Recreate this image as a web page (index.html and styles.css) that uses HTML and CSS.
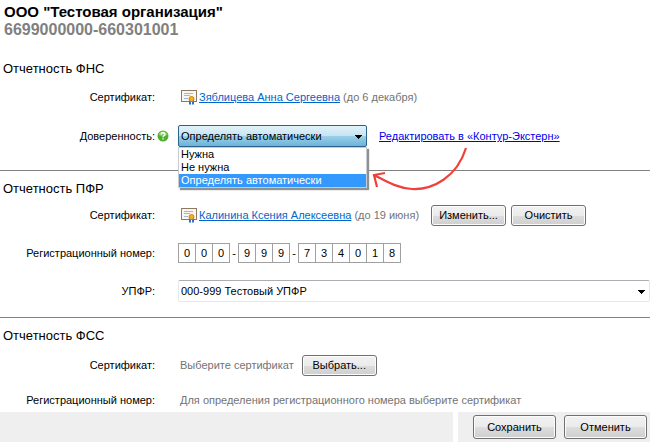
FILE: index.html
```html
<!DOCTYPE html>
<html lang="ru">
  <head>
    <meta charset="utf-8">
    <meta name="viewport" content="width=device-width, initial-scale=1">
    <title>ООО "Тестовая организация"</title>
    <link rel="stylesheet" href="styles.css">
  </head>
  <body>
    <svg class="defs" width="0" height="0">
      <symbol id="certificate" viewBox="0 0 16 15">
        <rect x="0.5" y="0.5" width="15" height="11" fill="#f8f6f2" stroke="#8c7a64"/>
        <path d="M3 3.500h9M3 5.500h6M3 8.500h4" stroke="#a9b3d6"/>
        <path d="M8 10v4.500h2V12h1v2.500h2V10z" fill="#2f6fd0"/>
        <circle cx="10.500" cy="9" r="2.500" fill="#f2b01e" stroke="#c98712"/>
      </symbol>
    </svg>
    <form class="page">
      <header class="company">
        <h1>ООО "Тестовая организация"</h1>
        <p class="inn">6699000000-660301001</p>
      </header>

      <section class="section fns">
        <h2>Отчетность ФНС</h2>
        <div class="row">
          <span class="label">Сертификат:</span>
          <div class="value">
            <svg class="cert" width="16" height="15"><use href="#certificate"/></svg>
            <a class="person" href="#">Зяблицева Анна Сергеевна</a>
            <span class="hint">(до 6 декабря)</span>
          </div>
        </div>
        <div class="row">
          <label class="label" for="trust">Доверенность:</label>
          <button class="help" type="button" aria-label="Справка">
            <svg width="12" height="12" viewBox="0 0 12 12">
              <circle cx="6" cy="6" r="5.500" fill="#4fae2e"/>
              <path d="M1.500 5a4.600 4.600 0 0 1 9 0c-3 1.500-6 1.500-9 0z" fill="#86cf66"/>
              <path d="M4.200 4.500c0-2.400 3.700-2.300 3.600-.1 0 1.300-1.800 1.400-1.800 2.900M6 8.300v1.300" fill="none" stroke="#fff" stroke-width="1.400"/>
            </svg>
          </button>
          <div class="value">
            <div class="dropdown">
              <select class="select select-open" id="trust">
                <option>Нужна</option>
                <option>Не нужна</option>
                <option selected>Определять автоматически</option>
              </select>
              <ul class="options">
                <li>Нужна</li>
                <li>Не нужна</li>
                <li class="active">Определять автоматически</li>
              </ul>
              <svg class="arrow" width="98" height="46" viewBox="0 0 98 46">
                <path d="M96 2C87 31 63 44 42 43 26 42 14 34 4 29M15 27L4 29l3 12" fill="none" stroke="#f0403c" stroke-width="2.200"/>
              </svg>
            </div>
            <a class="edit" href="#">Редактировать в «Контур-Экстерн»</a>
          </div>
        </div>
      </section>

      <section class="section pfr">
        <h2>Отчетность ПФР</h2>
        <div class="row">
          <span class="label">Сертификат:</span>
          <div class="value">
            <svg class="cert" width="16" height="15"><use href="#certificate"/></svg>
            <a class="person" href="#">Калинина Ксения Алексеевна</a>
            <span class="hint">(до 19 июня)</span>
            <div class="buttons">
              <button class="btn" type="button">Изменить...</button>
              <button class="btn" type="button">Очистить</button>
            </div>
          </div>
        </div>
        <div class="row">
          <label class="label" for="digit">Регистрационный номер:</label>
          <div class="value digits">
            <div class="group">
              <input id="digit" maxlength="1" value="0">
              <input aria-label="2" maxlength="1" value="0">
              <input aria-label="3" maxlength="1" value="0">
            </div>
            <span class="dash">-</span>
            <div class="group">
              <input aria-label="4" maxlength="1" value="9">
              <input aria-label="5" maxlength="1" value="9">
              <input aria-label="6" maxlength="1" value="9">
            </div>
            <span class="dash">-</span>
            <div class="group">
              <input aria-label="7" maxlength="1" value="7">
              <input aria-label="8" maxlength="1" value="3">
              <input aria-label="9" maxlength="1" value="4">
              <input aria-label="10" maxlength="1" value="0">
              <input aria-label="11" maxlength="1" value="1">
              <input aria-label="12" maxlength="1" value="8">
            </div>
          </div>
        </div>
        <div class="row">
          <label class="label" for="upfr">УПФР:</label>
          <div class="value">
            <select class="select select-wide" id="upfr">
              <option>000-999 Тестовый УПФР</option>
            </select>
          </div>
        </div>
      </section>

      <section class="section fss">
        <h2>Отчетность ФСС</h2>
        <div class="row">
          <span class="label">Сертификат:</span>
          <div class="value">
            <span class="hint empty">Выберите сертификат</span>
            <button class="btn" type="button">Выбрать...</button>
          </div>
        </div>
        <div class="row">
          <span class="label">Регистрационный номер:</span>
          <div class="value">
            <span class="hint empty">Для определения регистрационного номера выберите сертификат</span>
          </div>
        </div>
      </section>

      <footer class="footer">
        <div class="footer-left"></div>
        <div class="footer-right">
          <button class="btn btn-big" type="submit">Сохранить</button>
          <button class="btn btn-big" type="button">Отменить</button>
        </div>
      </footer>
    </form>
  </body>
</html>
```
FILE: styles.css
```css
* {
  box-sizing: border-box;
  font-family: "Liberation Sans", Arial, sans-serif;
}

body {
  margin: 0;
  background-color: #fff;
  color: #000;
  font-size: 11px;
}

h1, h2, p, ul {
  margin: 0;
  padding: 0;
}

.defs {
  position: absolute;
}

.company {
  padding: 3px 4px 12px;
  line-height: 18px;
}

h1 {
  font-size: 15px;
}

.inn {
  color: #808080;
  font-size: 16px;
  font-weight: bold;
}

.section {
  display: flex;
  flex-direction: column;
  gap: 16px;
  padding: 9px 0 15px;
}

.section + .section {
  border-top: 1px solid #808080;
}

h2 {
  margin: 0 3px -10px;
  font-size: 13px;
  font-weight: normal;
  line-height: 18px;
}

.fns {
  gap: 17px;
  padding-bottom: 23px;
}

.fns h2 {
  margin-bottom: -9px;
}

.fss {
  gap: 13px;
  padding-bottom: 1px;
}

.fss h2 {
  margin-bottom: -4px;
}

.row {
  display: grid;
  grid-template-columns: 155px 23px 1fr;
  align-items: center;
  min-height: 22px;
}

.label {
  text-align: right;
  white-space: nowrap;
}

.value {
  grid-column: 3;
  display: flex;
  align-items: center;
  white-space: nowrap;
}

.help {
  width: 12px;
  height: 12px;
  margin-left: 2px;
  padding: 0;
  border: none;
  background: none;
}

.help svg {
  display: block;
}

.cert {
  margin: 0 2px 0 3px;
}

.person {
  margin-right: 3px;
  color: #0066cc;
}

.hint {
  color: #737373;
}

.empty {
  margin: 0 8px 0 2px;
}

.edit {
  margin-left: 12px;
  color: #0000ee;
}

.select {
  appearance: none;
  display: block;
  height: 22px;
  margin: 0;
  padding: 0 18px 0 2px;
  border: 1px solid #e3e9ef;
  border-top-color: #abadb3;
  border-radius: 2px;
  background: linear-gradient(#000, #000) right 4px top 9px / 7px 1px no-repeat,
    linear-gradient(#000, #000) right 5px top 10px / 5px 1px no-repeat,
    linear-gradient(#000, #000) right 6px top 11px / 3px 1px no-repeat,
    linear-gradient(#000, #000) right 7px top 12px / 1px 1px no-repeat,
    #fff;
  color: #000;
  font-size: 11px;
}

.select-wide {
  width: 100%;
}

.dropdown {
  position: relative;
  width: 189px;
}

.select-open {
  width: 100%;
  border-color: #2c628b;
  background: linear-gradient(#000, #000) right 4px top 9px / 7px 1px no-repeat,
    linear-gradient(#000, #000) right 5px top 10px / 5px 1px no-repeat,
    linear-gradient(#000, #000) right 6px top 11px / 3px 1px no-repeat,
    linear-gradient(#000, #000) right 7px top 12px / 1px 1px no-repeat,
    linear-gradient(#e3f2fa, #c5e4f3 50%, #9acfe9 51%, #6cb3d9);
}

.options {
  position: absolute;
  top: 22px;
  left: 0;
  width: 100%;
  border: 1px solid #c8ccd0;
  background-color: #fff;
  box-shadow: 2px 2px 1px #909090;
  line-height: 13px;
  list-style: none;
}

.options li {
  padding-left: 2px;
}

.options .active {
  background-color: #3399ff;
  color: #fff;
}

.arrow {
  position: absolute;
  top: 21px;
  left: 192px;
}

.buttons {
  display: flex;
  gap: 5px;
  margin-left: 12px;
}

.btn {
  width: 75px;
  height: 21px;
  padding: 0 0 1px;
  border: 1px solid #707070;
  border-radius: 3px;
  background: linear-gradient(#f2f2f2, #ebebeb 50%, #dddddd 51%, #cfcfcf);
  box-shadow: inset 0 0 0 1px #fcfcfc;
  color: #000;
  font-size: 11px;
}

.btn-big {
  width: 83px;
  height: 24px;
}

.group {
  display: flex;
}

.group input {
  width: 18px;
  height: 20px;
  margin: 0 -1px 0 0;
  padding: 0;
  border: 1px solid #a0a0a0;
  border-radius: 0;
  color: #000;
  font-size: 11px;
  text-align: center;
}

.dash {
  width: 9px;
  padding-left: 1px;
  text-align: center;
}

.footer {
  display: flex;
  gap: 5px;
  min-height: 30px;
}

.footer-left {
  flex: 1;
  background-color: #efefef;
}

.footer-right {
  display: flex;
  align-items: center;
  gap: 8px;
  padding: 0 3px 0 15px;
  background-color: #efefef;
}
```
